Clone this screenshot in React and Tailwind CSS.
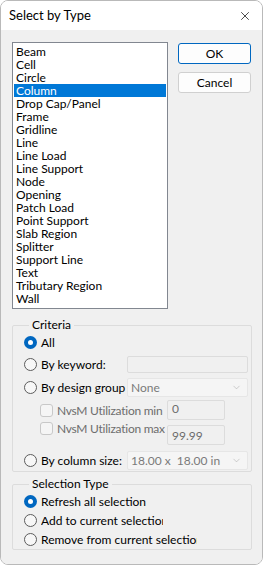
import { ChevronDown, X } from "lucide-react";

const types = [
    "Beam",
    "Cell",
    "Circle",
    "Column",
    "Drop Cap/Panel",
    "Frame",
    "Gridline",
    "Line",
    "Line Load",
    "Line Support",
    "Node",
    "Opening",
    "Patch Load",
    "Point Support",
    "Slab Region",
    "Splitter",
    "Support Line",
    "Text",
    "Tributary Region",
    "Wall",
];

function Radio({ checked }) {
    return checked ? (
        <span className="w-[13px] h-[13px] rounded-full bg-[#0067c0] flex items-center justify-center shrink-0">
            <span className="w-[5px] h-[5px] rounded-full bg-white" />
        </span>
    ) : (
        <span className="w-[13px] h-[13px] rounded-full border border-[#5c5c5c] bg-[#f7f7f7] shrink-0" />
    );
}

function Checkbox() {
    return <span className="w-[13px] h-[13px] rounded-[3px] border border-[#c8c8c8] bg-[#f5f5f5] shrink-0" />;
}

function Combo({ value }) {
    return (
        <div className="w-[121px] h-[19px] bg-[#f5f5f5] border border-[#e6e6e6] rounded-[2px] flex items-center pl-[3px] pr-[5px] text-[#7a7a7a] whitespace-pre">
            <span className="flex-1">{value}</span>
            <ChevronDown size={11} strokeWidth={1} className="text-[#9a9a9a]" />
        </div>
    );
}

export default function App() {
    return (
        <div
            className="w-[263px] h-[565px] bg-white text-[12px] leading-[13px] text-black"
            style={{ fontFamily: '"Segoe UI", Lato, "Noto Sans", sans-serif' }}
        >
            <div className="w-full h-full flex flex-col border border-[#b9b9b9] rounded-[8px] overflow-hidden">
                {/* Title bar */}
                <div className="h-[29px] bg-white flex items-center justify-between pl-[8px] pr-[10px] shrink-0">
                    <span className="text-[13px]">Select by Type</span>
                    <X size={14} strokeWidth={1.2} />
                </div>

                <div className="flex-1 bg-[#f0f0f0] pl-[11px] pr-[10px] pt-[12px]">
                    {/* List + buttons */}
                    <div className="flex">
                        <ul className="w-[156px] h-[267px] bg-white border border-[#828790] py-[2px] px-px">
                            {types.map((t) => (
                                <li
                                    key={t}
                                    className={`h-[13px] pl-[2px] whitespace-nowrap ${t === "Column" ? "bg-[#0078d7] text-white" : ""}`}
                                >
                                    {t}
                                </li>
                            ))}
                        </ul>
                        <div className="ml-[10px] mt-px flex flex-col gap-[8px]">
                            <button className="w-[73px] h-[21px] rounded-[3px] border border-[#0067c0] bg-[#fdfdfd] text-[12px]">
                                OK
                            </button>
                            <button className="w-[73px] h-[21px] rounded-[3px] border border-[#d0d0d0] bg-[#fdfdfd] text-[12px]">
                                Cancel
                            </button>
                        </div>
                    </div>

                    {/* Criteria */}
                    <fieldset className="mt-[8px] w-[240px] border border-[#dcdcdc] rounded-[2px] pl-[11px] pb-px">
                        <legend className="ml-[5px] px-[3px] leading-[16px]">Criteria</legend>
                        <div className="h-[18px] flex items-center gap-[4px]">
                            <Radio checked />
                            <span>All</span>
                        </div>
                        <div className="mt-[4px] h-[18px] flex items-center">
                            <div className="w-[103px] flex items-center gap-[4px]">
                                <Radio />
                                <span>By keyword:</span>
                            </div>
                            <div className="w-[121px] h-[17px] border border-[#dcdcdc] rounded-[2px] bg-[#f0f0f0]" />
                        </div>
                        <div className="mt-[5px] h-[19px] flex items-center">
                            <div className="w-[103px] flex items-center gap-[4px] whitespace-nowrap overflow-hidden">
                                <Radio />
                                <span>By design group</span>
                            </div>
                            <Combo value="None" />
                        </div>
                        <div className="mt-[3px] h-[20px] flex items-center text-[#6d6d6d]">
                            <div className="w-[143px] pl-[16px] flex items-center gap-[4px]">
                                <Checkbox />
                                <span className="w-[108px] whitespace-nowrap overflow-hidden tracking-[-0.25px]">NvsM Utilization min</span>
                            </div>
                            <div className="w-[58px] h-[20px] border border-[#dcdcdc] rounded-[2px] pl-[4px] leading-[16px]">0</div>
                        </div>
                        <div className="mt-[5px] h-[20px] flex items-start text-[#6d6d6d]">
                            <div className="w-[143px] -mt-[3px] pl-[16px] flex items-center gap-[4px]">
                                <Checkbox />
                                <span className="w-[108px] whitespace-nowrap overflow-hidden tracking-[-0.25px]">NvsM Utilization max</span>
                            </div>
                            <div className="w-[58px] h-[20px] border border-[#dcdcdc] rounded-[2px] pl-[4px] pt-[3px]">99.99</div>
                        </div>
                        <div className="mt-[6px] h-[19px] flex items-center">
                            <div className="w-[103px] flex items-center gap-[4px] whitespace-nowrap">
                                <Radio />
                                <span>By column size:</span>
                            </div>
                            <Combo value="18.00 x  18.00 in" />
                        </div>
                    </fieldset>

                    {/* Selection Type */}
                    <fieldset className="mt-[4px] w-[240px] border border-[#dcdcdc] rounded-[2px] pl-[11px]">
                        <legend className="ml-[5px] px-[3px] leading-[16px]">Selection Type</legend>
                        <div className="h-[19px] flex items-center gap-[4px]">
                            <Radio checked />
                            <span>Refresh all selection</span>
                        </div>
                        <div className="h-[19px] flex items-center gap-[4px]">
                            <Radio />
                            <span className="w-[122px] whitespace-nowrap overflow-hidden">Add to current selection</span>
                        </div>
                        <div className="h-[19px] flex items-center gap-[4px]">
                            <Radio />
                            <span className="w-[156px] whitespace-nowrap overflow-hidden">Remove from current selection</span>
                        </div>
                    </fieldset>
                </div>
            </div>
        </div>
    );
}
